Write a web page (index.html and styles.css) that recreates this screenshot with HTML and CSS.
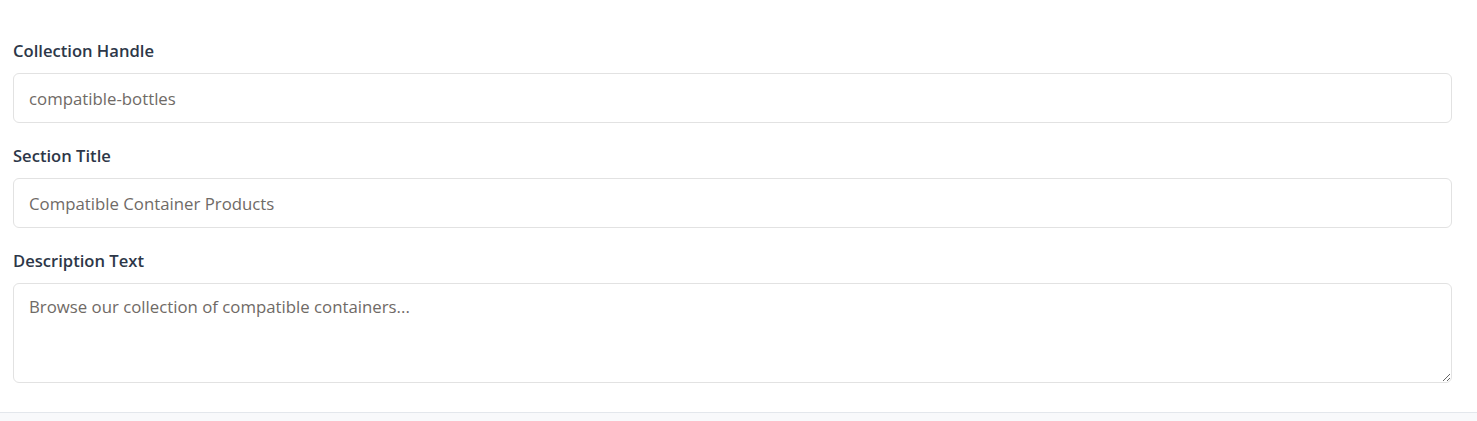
FILE: index.html
```html
<!DOCTYPE html>
<html lang="en">
<head>
<meta charset="utf-8">
<title>Collection settings</title>
<link rel="stylesheet" href="styles.css">
</head>
<body>
<div class="card">
  <div class="field">
    <label class="label" for="handle">Collection Handle</label>
    <input class="input" id="handle" type="text" value="compatible-bottles">
  </div>
  <div class="field">
    <label class="label" for="title">Section Title</label>
    <input class="input" id="title" type="text" value="Compatible Container Products">
  </div>
  <div class="field">
    <label class="label" for="desc">Description Text</label>
    <textarea class="input textarea" id="desc">Browse our collection of compatible containers...</textarea>
  </div>
</div>
</body>
</html>
```
FILE: styles.css
```css
html, body {
  margin: 0;
  padding: 0;
}
body {
  background: #f8f9fb;
  font-family: "Segoe UI", "Open Sans", "Noto Sans", sans-serif;
}
.card {
  background: #ffffff;
  padding: 39px 25px 29px 13px;
  border-bottom: 1px solid #e3e7ec;
  box-shadow: 0 1px 2px rgba(0, 0, 0, 0.04);
  display: flex;
  flex-direction: column;
  gap: 21px;
}
.field {
  display: flex;
  flex-direction: column;
  gap: 10px;
}
.label {
  font-size: 16.6px;
  font-weight: 600;
  color: #2d3748;
  line-height: 24px;
}
.input {
  box-sizing: border-box;
  width: 100%;
  height: 50px;
  margin: 0;
  padding: 0 15px;
  border: 1px solid #e2e2e2;
  border-radius: 6px;
  background: #ffffff;
  font-family: inherit;
  font-size: 16.8px;
  color: #6f6a66;
  outline: none;
}
.textarea {
  height: 100px;
  padding: 11px 15px;
  line-height: 24px;
  resize: vertical;
  display: block;
}
```
